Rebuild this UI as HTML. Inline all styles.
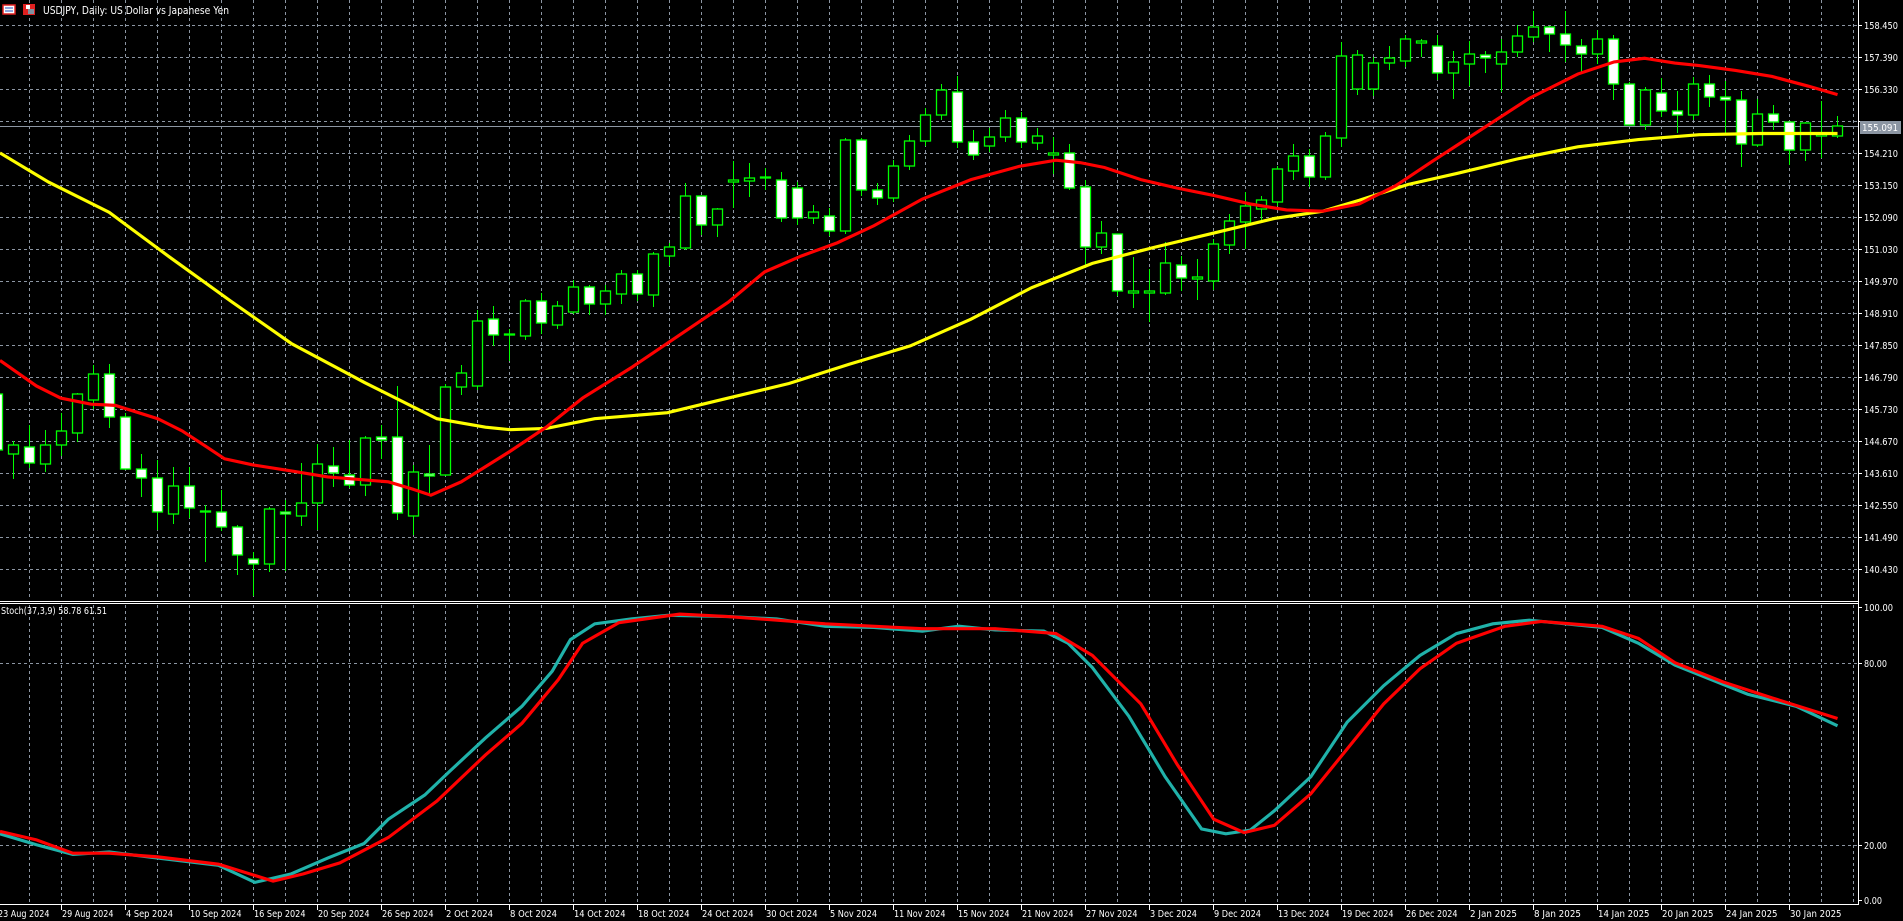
<!DOCTYPE html>
<html><head><meta charset="utf-8"><style>
html,body{margin:0;padding:0;background:#000;width:1903px;height:921px;overflow:hidden}
svg{display:block}
text{font-family:"DejaVu Sans","Liberation Sans",sans-serif;font-size:10px;fill:#fff}
</style></head><body>
<svg id="s" width="1903" height="921" xmlns="http://www.w3.org/2000/svg">
<rect width="1903" height="921" fill="#000"/>
<g id="grid" stroke="#8c96a3" stroke-width="1" stroke-dasharray="3,3"></g>
<g id="cur"><line x1="0" y1="126.5" x2="1858" y2="126.5" stroke="#8c96a3" stroke-width="1"/></g>
<g id="candles"></g>
<g transform="scale(1.2137)" fill="none">
<polyline id="yel" stroke="#ffff00" stroke-width="2.6" points="0,126 40,150 90,175 140,212 190,248 240,283 300,315 360,345 400,352 420,354 450,353 490,345 550,340 600,328 650,316 700,300 750,285 800,263 850,237 900,217 950,204 1000,192 1050,180 1090,174 1120,165 1160,152 1200,143 1250,131 1300,121 1350,115 1400,111 1450,110 1514,110"/>
<polyline stroke="#ff0000" stroke-width="2.6" points="0,297 30,318 50,328 75,333 95,334 130,345 150,355 170,368 185,378 208,383 240,388 270,393 320,397 340,403 355,408 380,397 420,372 450,352 480,328 520,303 560,276 600,249 630,224 660,211 690,200 720,186 760,164 800,148 840,137 870,132 890,134 910,138 940,148 970,155 1000,161 1030,168 1060,173 1090,174 1120,168 1150,153 1180,133 1220,107 1260,81 1300,61 1330,51 1355,48 1380,52 1400,54 1430,58 1460,63 1490,71 1514,78"/>
<polyline stroke="#20b2aa" stroke-width="2.6" points="0,687 30,696 60,704 90,702 130,707 180,713 210,727 240,720 270,707 300,695 320,675 350,655 370,636 400,608 430,582 455,553 470,527 490,514 520,510 550,507 600,508 640,510 680,516 720,517 760,520 790,516 820,519 860,520 880,530 900,550 930,590 960,640 990,683 1010,687 1030,684 1050,668 1080,640 1110,595 1140,565 1170,540 1200,522 1230,514 1260,511 1290,514 1320,517 1350,530 1380,548 1410,560 1440,572 1480,582 1514,598"/>
<polyline stroke="#ff0000" stroke-width="2.6" points="0,685 30,692 60,703 90,703 130,706 180,712 225,726 250,720 280,711 320,690 360,660 400,622 430,596 460,560 480,530 510,513 560,506 600,508 680,514 760,518 820,518 870,522 900,540 940,580 970,630 1000,675 1025,686 1050,680 1080,654 1110,617 1140,580 1170,551 1200,530 1240,516 1270,512 1320,516 1350,526 1380,546 1420,562 1460,575 1514,592"/>
</g>
<g id="axes"></g>
<g id="lbl"></g>
<g>
<rect x="3" y="5" width="12" height="9" fill="#fff" stroke="#e02020" stroke-width="1.5"/>
<line x1="5" y1="8" x2="13" y2="8" stroke="#2050c0"/><line x1="5" y1="11" x2="13" y2="11" stroke="#2050c0"/>
<rect x="23" y="4" width="12" height="11" fill="#e02020"/><rect x="26" y="5" width="4" height="4" fill="#fff"/><rect x="28" y="9" width="6" height="5" fill="#8090a0"/>
<text x="43" y="14" style="font-size:11px" textLength="186" lengthAdjust="spacingAndGlyphs">USDJPY, Daily:  US Dollar vs Japanese Yen</text>
<text x="1" y="614" textLength="106" lengthAdjust="spacingAndGlyphs">Stoch(37,3,9) 58.78 61.51</text>
</g>
<rect x="1860" y="121" width="41" height="13" fill="#8c96a3"/>
<text x="1862" y="131" textLength="36" lengthAdjust="spacingAndGlyphs">155.091</text>
</svg>
<script>
var NS="http://www.w3.org/2000/svg";
function el(p,t,a,txt){var e=document.createElementNS(NS,t);for(var k in a)e.setAttribute(k,a[k]);if(txt!==undefined)e.textContent=txt;p.appendChild(e);return e;}
var g=document.getElementById('grid');
for(var x=29;x<1858;x+=32){el(g,'line',{x1:x+.5,y1:0,x2:x+.5,y2:600});el(g,'line',{x1:x+.5,y1:605,x2:x+.5,y2:904});}
for(var y=25;y<=569;y+=32){el(g,'line',{x1:0,y1:y+.5,x2:1858,y2:y+.5});}
el(g,'line',{x1:0,y1:663.5,x2:1858,y2:663.5});el(g,'line',{x1:0,y1:845.5,x2:1858,y2:845.5});
var ax=document.getElementById('axes');
el(ax,'line',{x1:1858.5,y1:0,x2:1858.5,y2:905,stroke:'#fff'});
el(ax,'line',{x1:0,y1:601.5,x2:1858,y2:601.5,stroke:'#fff'});
el(ax,'line',{x1:0,y1:603.5,x2:1858,y2:603.5,stroke:'#fff'});
el(ax,'line',{x1:0,y1:904.5,x2:1859,y2:904.5,stroke:'#fff'});
var L=document.getElementById('lbl');
var p=158.45;
for(var y=25;y<=569;y+=32){el(ax,'line',{x1:1858,y1:y+.5,x2:1862,y2:y+.5,stroke:'#fff'});if(y!==121)el(L,'text',{x:1864,y:y+4,textLength:34,lengthAdjust:'spacingAndGlyphs'},p.toFixed(3));p-=1.06;}
[[607,'100.00',29],[663,'80.00',23],[845,'20.00',23],[900,'0.00',18]].forEach(function(a){el(ax,'line',{x1:1858,y1:a[0]+.5,x2:1862,y2:a[0]+.5,stroke:'#fff'});el(L,'text',{x:1864,y:a[0]+4,textLength:a[2],lengthAdjust:'spacingAndGlyphs'},a[1]);});
var d=['23 Aug 2024','29 Aug 2024','4 Sep 2024','10 Sep 2024','16 Sep 2024','20 Sep 2024','26 Sep 2024','2 Oct 2024','8 Oct 2024','14 Oct 2024','18 Oct 2024','24 Oct 2024','30 Oct 2024','5 Nov 2024','11 Nov 2024','15 Nov 2024','21 Nov 2024','27 Nov 2024','3 Dec 2024','9 Dec 2024','13 Dec 2024','19 Dec 2024','26 Dec 2024','2 Jan 2025','8 Jan 2025','14 Jan 2025','20 Jan 2025','24 Jan 2025','30 Jan 2025'];
d.forEach(function(s,i){var x=-3+64*i;el(ax,'line',{x1:x+.5,y1:904,x2:x+.5,y2:910,stroke:'#fff'});el(L,'text',{x:x+1,y:917,textLength:(s.length-10)*4.5+47,lengthAdjust:'spacingAndGlyphs'},s);});
var C=[[0,394,450,388,456],[1,445,454,441,479],[0,447,463,425,468],[1,445,464,430,472],[1,431,445,413,456],[1,394,433,393,442],[1,374,400,365,409],[0,374,417,364,428],[0,417,469,413,470],[0,469,478,454,497],
[0,478,512,460,530],[1,486,514,467,524],[0,486,508,467,518],[1,511,512,505,562],[0,512,527,490,531],[0,527,555,525,575],[0,559,564,552,596],[1,509,564,507,572],[0,512,514,500,571],[1,503,516,463,526],
[1,464,503,444,530],[0,466,473,447,487],[0,475,485,440,488],[1,438,485,436,496],[0,437,440,425,459],[0,437,513,386,520],[1,472,516,465,535],[0,474,476,445,495],[1,387,475,384,476],[1,373,387,365,395],
[1,321,386,310,390],[0,319,335,306,346],[1,334,335,329,361],[1,301,336,299,340],[0,301,323,293,334],[1,306,325,301,329],[1,287,312,280,314],[0,287,304,285,315],[1,291,304,285,315],[1,274,294,270,304],
[0,274,294,270,301],[1,254,295,252,307],[1,247,256,243,266],[1,196,248,183,250],[0,196,225,196,235],[1,209,225,208,237],[1,180,182,161,208],[1,178,181,163,197],[1,177,178,168,190],[0,180,218,172,222],
[0,188,218,182,225],[1,212,218,205,224],[0,216,231,208,236],[1,140,231,138,234],[0,140,190,138,196],[0,190,198,183,205],[1,166,198,160,202],[1,141,166,135,170],[1,115,141,108,146],[1,90,115,84,120],
[0,92,142,76,148],[0,142,155,130,160],[1,137,146,128,152],[1,118,137,110,142],[0,118,142,112,148],[1,136,143,128,150],[1,153,155,137,174],[0,153,188,144,190],[0,187,247,180,268],[1,233,247,221,254],
[0,234,291,234,296],[1,291,293,257,308],[1,291,293,269,322],[1,263,293,242,295],[0,265,278,256,291],[1,277,279,259,300],[1,244,281,239,290],[1,221,245,214,254],[1,206,222,192,249],[1,200,209,196,222],
[1,169,202,166,206],[1,156,171,144,180],[0,156,177,149,187],[1,136,177,132,180],[1,56,138,42,147],[1,55,89,50,95],[1,63,89,57,96],[1,58,63,46,70],[1,39,61,35,67],[1,41,43,39,57],
[0,46,73,35,80],[1,62,73,51,99],[1,54,64,41,86],[0,55,58,51,73],[1,52,64,39,92],[1,36,52,25,57],[1,27,37,11,42],[0,27,34,26,52],[0,34,45,11,62],[0,46,54,39,72],
[1,39,54,30,64],[0,39,84,35,100],[0,84,125,82,125],[1,90,125,87,130],[0,93,111,78,117],[0,111,115,91,133],[1,84,115,77,120],[0,84,97,75,107],[0,97,100,81,133],[0,100,144,91,167],
[1,114,145,99,147],[0,114,122,105,130],[0,122,150,122,165],[1,123,150,122,161],[1,133,136,101,158],[1,126,136,116,138]];
var cg=document.getElementById('candles');
C.forEach(function(c,i){var x=-3+16*i;
el(cg,'line',{x1:x+.5,y1:c[3],x2:x+.5,y2:c[1],stroke:'#00ff00','stroke-width':1});
el(cg,'line',{x1:x+.5,y1:c[2],x2:x+.5,y2:c[4],stroke:'#00ff00','stroke-width':1});
var h=Math.max(c[2]-c[1],1);
el(cg,'rect',{x:x-4.5,y:c[1],width:10,height:h,fill:c[0]?'#000':'#fff',stroke:'#00ff00','stroke-width':1.3});
});
</script>
</body></html>
